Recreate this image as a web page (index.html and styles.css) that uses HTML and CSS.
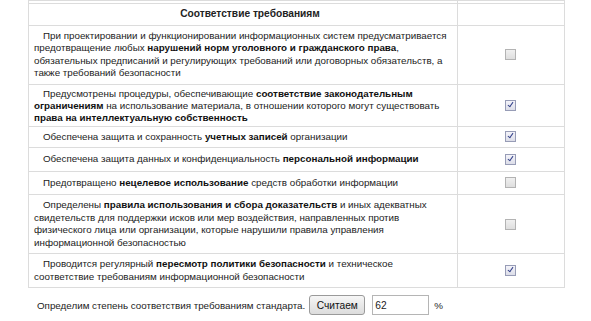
FILE: index.html
```html
<!DOCTYPE html>
<html lang="ru">
<head>
<meta charset="utf-8">
<link rel="stylesheet" href="styles.css">
</head>
<body>
<div class="page">
<table class="req">
  <tr class="stub"><td class="txt"></td><td class="chk"></td></tr>
  <tr class="head"><td class="txt">Соответствие требованиям</td><td class="chk"></td></tr>
  <tr><td class="txt">При проектировании и функционировании информационных систем предусматривается<br>предотвращение любых <b>нарушений норм уголовного и гражданского права</b>,<br>обязательных предписаний и регулирующих требований или договорных обязательств, а<br>также требований безопасности</td><td class="chk"><span class="box"></span></td></tr>
  <tr class="tight"><td class="txt">Предусмотрены процедуры, обеспечивающие <b>соответствие законодательным</b><br><b>ограничениям</b> на использование материала, в отношении которого могут существовать<br><b>права на интеллектуальную собственность</b></td><td class="chk"><span class="box on"></span></td></tr>
  <tr><td class="txt">Обеспечена защита и сохранность <b>учетных записей</b> организации</td><td class="chk"><span class="box on"></span></td></tr>
  <tr class="roomy"><td class="txt">Обеспечена защита данных и конфиденциальность <b>персональной информации</b></td><td class="chk"><span class="box on"></span></td></tr>
  <tr class="roomy"><td class="txt">Предотвращено <b>нецелевое использование</b> средств обработки информации</td><td class="chk"><span class="box"></span></td></tr>
  <tr><td class="txt">Определены <b>правила использования и сбора доказательств</b> и иных адекватных<br>свидетельств для поддержки исков или мер воздействия, направленных против<br>физического лица или организации, которые нарушили правила управления<br>информационной безопасностью</td><td class="chk"><span class="box"></span></td></tr>
  <tr><td class="txt">Проводится регулярный <b>пересмотр политики безопасности</b> и техническое<br>соответствие требованиям информационной безопасности</td><td class="chk"><span class="box on"></span></td></tr>
</table>
<div class="calc">
  <span class="label">Определим степень соответствия требованиям стандарта.</span>
  <button class="btn" type="button">Считаем</button>
  <input class="result" type="text" value="62">
  <span class="pct">%</span>
</div>
</div>
</body>
</html>
```

FILE: styles.css
```css
html, body {
  margin: 0;
  padding: 0;
  background: #fff;
}
body {
  font-family: "Liberation Sans", Arial, sans-serif;
  font-size: 9.8px;
  color: #222;
}
.page {
  padding-left: 28px;
  width: 537px;
}
.req {
  border-collapse: collapse;
  width: 537px;
}
.req td {
  border: 1px solid #dcdcdc;
  line-height: 12.5px;
  padding: 4px 0 4px 5px;
  vertical-align: middle;
}
.req td.txt {
  width: 423px;
  text-indent: 9px;
  white-space: nowrap;
}
.req td.chk {
  text-align: center;
  padding: 0;
}
.req tr.stub td {
  height: 2px;
  padding: 0;
  line-height: 0;
}
.req tr.head td {
  font-weight: bold;
  font-size: 10.2px;
  text-align: center;
  padding-top: 4px;
  padding-bottom: 4px;
}
.req tr.tight td.txt {
  line-height: 12px;
  padding-top: 3px;
  padding-bottom: 2px;
}
.req tr.roomy td.txt {
  padding-top: 5px;
  padding-bottom: 5px;
}
.req b {
  font-weight: bold;
  color: #111;
}
.box {
  display: inline-block;
  width: 9px;
  height: 9px;
  border: 1px solid #b3b3b3;
  background: linear-gradient(#f0f0f0, #dedede);
  vertical-align: middle;
  position: relative;
  left: -1px;
}
.box.on {
  border-color: #979cb6;
  background: linear-gradient(#f4f4fa, #dcdde8);
}
.box.on::after {
  content: "";
  position: absolute;
  left: 3px;
  top: 0px;
  width: 2px;
  height: 5px;
  border: solid #34428a;
  border-width: 0 1.5px 1.5px 0;
  transform: rotate(35deg);
}
.calc {
  display: flex;
  align-items: center;
  padding: 4px 0 0 9px;
  height: 26px;
}
.label {
  margin-right: 4px;
}
.btn {
  font-family: "Liberation Sans", Arial, sans-serif;
  font-size: 10.2px;
  color: #111;
  height: 20px;
  width: 56px;
  padding: 0;
  border: 1px solid #9a9a9a;
  border-radius: 3px;
  background: linear-gradient(#f6f6f6, #dcdcdc);
}
.result {
  font-family: "Liberation Sans", Arial, sans-serif;
  font-size: 10.2px;
  width: 51px;
  height: 16px;
  margin-left: 7px;
  padding: 1px 2px;
  border: 1px solid #b5b5b5;
  color: #222;
}
.pct {
  margin-left: 5px;
}
```
